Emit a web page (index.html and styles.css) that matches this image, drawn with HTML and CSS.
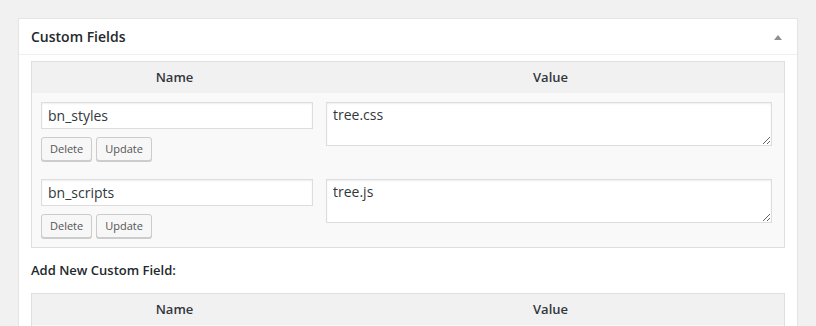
FILE: index.html
```html
<!DOCTYPE html>
<html lang="en">
<head>
<meta charset="utf-8">
<title>Custom Fields</title>
<link rel="stylesheet" href="styles.css">
</head>
<body>
<div class="postbox">
  <div class="postbox-header">
    <h2 class="hndle">Custom Fields</h2>
    <span class="toggle-arrow" aria-hidden="true"></span>
  </div>
  <div class="inside">
    <table class="meta-table">
      <thead>
        <tr><th class="col-left">Name</th><th class="col-right">Value</th></tr>
      </thead>
      <tbody>
        <tr>
          <td class="col-left">
            <input class="text-input" type="text" value="bn_styles">
            <div class="actions">
              <button class="btn" type="button">Delete</button>
              <button class="btn" type="button">Update</button>
            </div>
          </td>
          <td class="col-right"><textarea class="value-area">tree.css</textarea></td>
        </tr>
        <tr>
          <td class="col-left">
            <input class="text-input" type="text" value="bn_scripts">
            <div class="actions">
              <button class="btn" type="button">Delete</button>
              <button class="btn" type="button">Update</button>
            </div>
          </td>
          <td class="col-right"><textarea class="value-area">tree.js</textarea></td>
        </tr>
      </tbody>
    </table>
    <p class="add-new">Add New Custom Field:</p>
    <table class="meta-table">
      <thead>
        <tr><th class="col-left">Name</th><th class="col-right">Value</th></tr>
      </thead>
      <tbody>
        <tr>
          <td class="col-left"><input class="text-input" type="text" value=""></td>
          <td class="col-right"><textarea class="value-area"></textarea></td>
        </tr>
      </tbody>
    </table>
  </div>
</div>
</body>
</html>
```
FILE: styles.css
```css
html, body {
  margin: 0;
  padding: 0;
}
body {
  background: #f1f1f1;
  font-family: "Open Sans", "Liberation Sans", sans-serif;
  color: #23282d;
  padding: 18px 0 0 18px;
}
.postbox {
  width: 778px;
  background: #fff;
  border: 1px solid #e5e5e5;
  box-shadow: 0 1px 1px rgba(0,0,0,0.04);
}
.postbox-header {
  display: flex;
  align-items: center;
  justify-content: space-between;
  border-bottom: 1px solid #eee;
}
.hndle {
  margin: 0;
  padding: 8px 12px;
  font-size: 14px;
  line-height: 19px;
  font-weight: 600;
  color: #23282d;
}
.toggle-arrow {
  width: 0;
  height: 0;
  border-left: 4px solid transparent;
  border-right: 4px solid transparent;
  border-bottom: 5px solid #8c8f94;
  margin-right: 15px;
  margin-top: 1px;
}
.inside {
  padding: 6px 12px 12px;
}
.meta-table {
  width: 754px;
  table-layout: fixed;
  border-collapse: separate;
  border-spacing: 0;
  border: 1px solid #dfdfdf;
  background: #f9f9f9;
}
.meta-table th {
  background: #f1f1f1;
  font-size: 13px;
  font-weight: 600;
  color: #32373c;
  height: 31px;
  padding: 0;
  text-align: center;
  line-height: 31px;
}
.meta-table th.col-left { width: 285px; }
.meta-table td {
  vertical-align: top;
  padding: 9px 0 9px 9px;
}
.meta-table td.col-left { padding-right: 4px; }
.meta-table td.col-right { padding-right: 12px; }
.text-input {
  display: block;
  box-sizing: border-box;
  width: 272px;
  height: 27px;
  margin: 0;
  padding: 2px 6px;
  font-family: "Open Sans", "Liberation Sans", sans-serif;
  font-size: 14px;
  color: #32373c;
  background: #fff;
  border: 1px solid #ddd;
  box-shadow: inset 0 1px 2px rgba(0,0,0,0.07);
  outline: none;
}
.value-area {
  display: block;
  box-sizing: border-box;
  width: 446px;
  height: 44px;
  margin: 0;
  padding: 2px 6px;
  font-family: "Open Sans", "Liberation Sans", sans-serif;
  font-size: 14px;
  line-height: 20px;
  color: #32373c;
  background: #fff;
  border: 1px solid #ddd;
  box-shadow: inset 0 1px 2px rgba(0,0,0,0.07);
  resize: vertical;
}
.actions {
  display: flex;
  gap: 4px;
  margin-top: 8px;
}
.btn {
  box-sizing: border-box;
  height: 24px;
  margin: 0;
  padding: 0 8px 1px;
  font-family: "Open Sans", "Liberation Sans", sans-serif;
  font-size: 11px;
  line-height: 22px;
  color: #555;
  background: #f7f7f7;
  border: 1px solid #ccc;
  border-radius: 3px;
  box-shadow: 0 1px 0 #ccc;
}
.add-new {
  margin: 12px 0 13px;
  font-size: 13px;
  line-height: 20px;
  font-weight: 600;
  color: #23282d;
}
```
